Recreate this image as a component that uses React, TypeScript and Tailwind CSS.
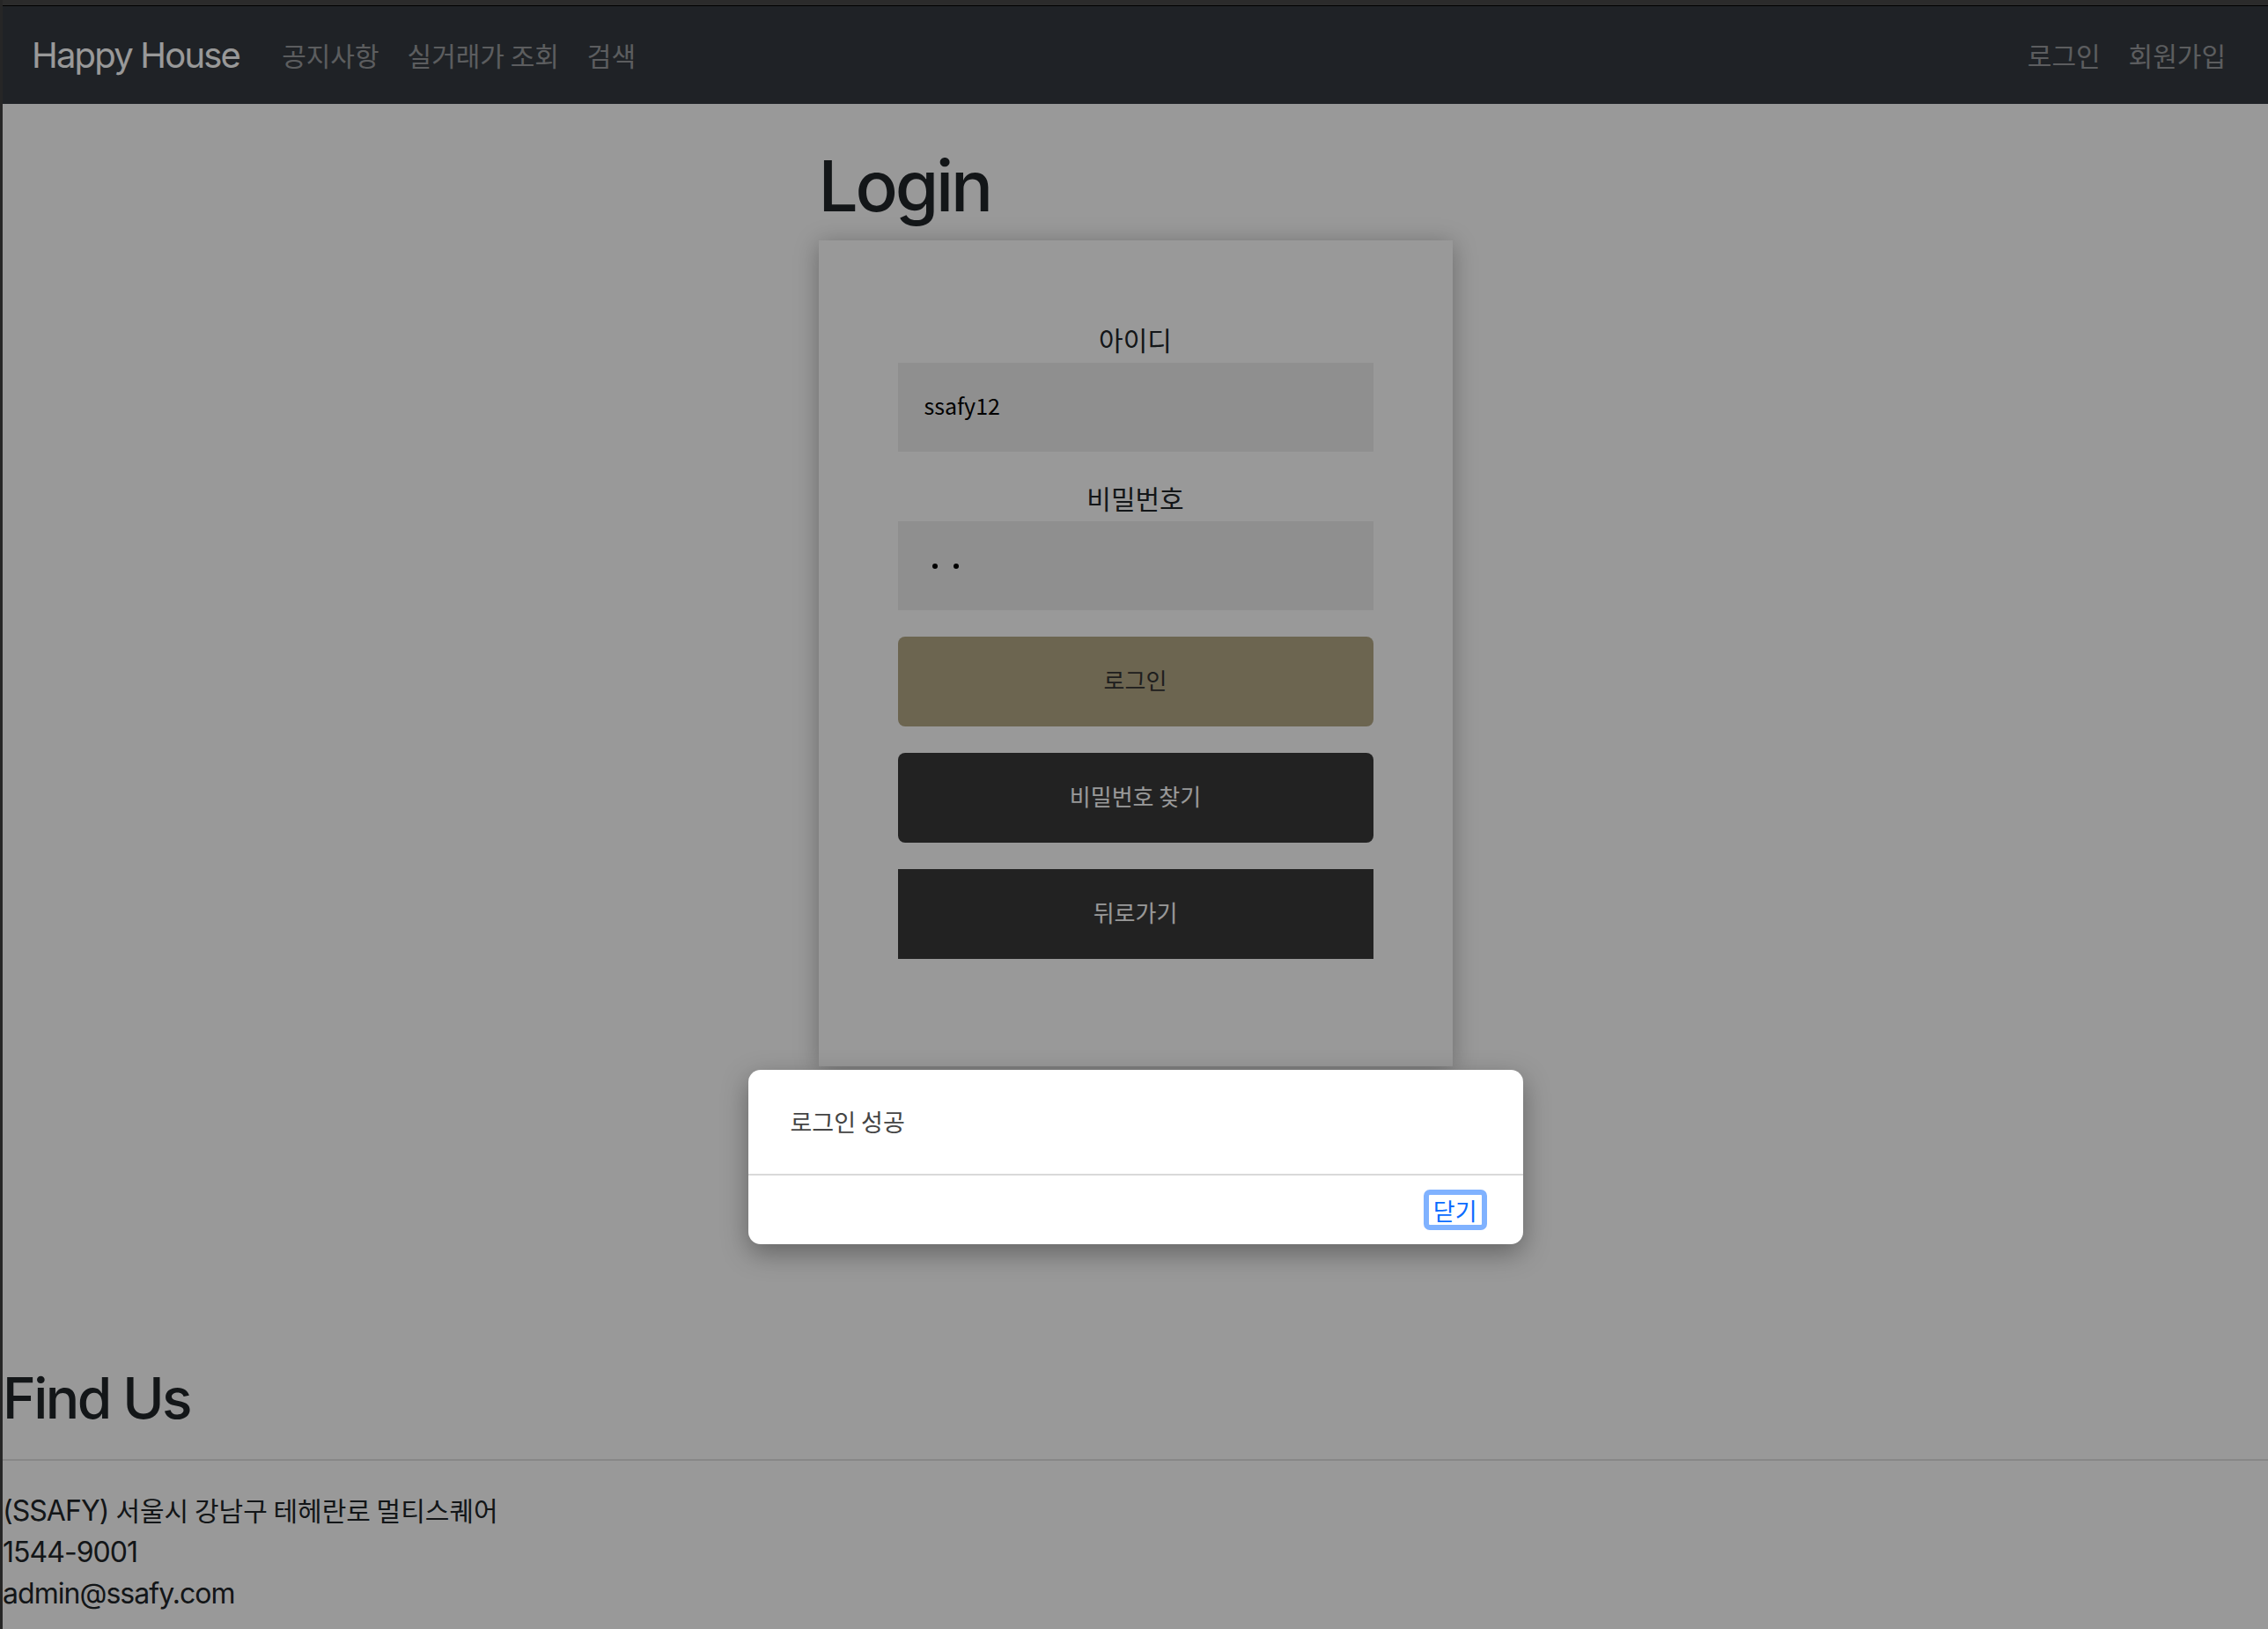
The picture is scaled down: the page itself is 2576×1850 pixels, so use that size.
import React from "react";

const KR = "font-['Noto_Sans_CJK_KR',sans-serif]";

const NavLink = ({ label }: { label: string }) => (
  <a className={`px-4 text-[30px] text-white/50 ${KR}`}>{label}</a>
);

const Field = ({ label, children }: { label: string; children: React.ReactNode }) => (
  <div className="flex flex-col">
    <label className={`h-[49px] leading-[44px] text-center text-[30px] text-[#212529] ${KR}`}>{label}</label>
    <div className="h-[101px] bg-[#eeeeee] flex items-center pl-[30px]">{children}</div>
  </div>
);

const App = () => {
  return (
    <div className="relative min-h-screen bg-white border-l-[3px] border-[#262626] font-[Inter,'Noto_Sans_CJK_KR',sans-serif] text-[#212529]">
      {/* window edge */}
      <div className="h-[6px] bg-[#484848]" />
      <div className="h-px bg-black" />

      {/* navbar */}
      <nav className="h-[111px] bg-[#343a40] flex items-center pl-[33px] pr-8">
        <a className="text-[40px] tracking-[-0.045em] text-white mr-[32px]">Happy House</a>
        <NavLink label="공지사항" />
        <NavLink label="실거래가 조회" />
        <NavLink label="검색" />
        <div className="ml-auto flex">
          <NavLink label="로그인" />
          <NavLink label="회원가입" />
        </div>
      </nav>

      {/* login */}
      <main className="w-[720px] mx-auto">
        <h1 className="mt-[45px] mb-[14px] text-[80px] leading-[1.2] font-medium tracking-[-0.04em]">Login</h1>
        <div className="bg-white shadow-[0_4px_26px_rgba(0,0,0,0.3)] px-[90px] pt-[90px] pb-[122px] flex flex-col gap-[30px]">
          <Field label="아이디">
            <span className={`mb-[4px] text-[25px] text-black ${KR}`}>ssafy12</span>
          </Field>
          <Field label="비밀번호">
            <div className="flex gap-[18px] ml-[9px]">
              <span className="w-[6px] h-[6px] rounded-full bg-black" />
              <span className="w-[6px] h-[6px] rounded-full bg-black" />
            </div>
          </Field>
          <button className={`h-[102px] pb-[5px] rounded-[8px] bg-[#b4a885] text-[26px] text-[#333] ${KR}`}>로그인</button>
          <button className={`h-[102px] pb-[5px] rounded-[8px] bg-[#3a3a3a] text-[26px] text-white ${KR}`}>비밀번호 찾기</button>
          <button className={`h-[102px] pb-[5px] bg-[#3a3a3a] text-[26px] text-white ${KR}`}>뒤로가기</button>
        </div>
      </main>

      {/* footer */}
      <footer className="mt-[339px]">
        <h2 className="text-[64px] leading-[1.2] font-medium tracking-[-0.04em]">Find Us</h2>
        <div className="mt-[30px] border-t-2 border-[#e2e2e2]" />
        <div className="mt-[32px] text-[32px] leading-[47px] tracking-[-0.03em]">
          <p>
            (SSAFY) <span className={`text-[30px] tracking-normal ${KR}`}>서울시 강남구 테헤란로 멀티스퀘어</span>
          </p>
          <p>1544-9001</p>
          <p>admin@ssafy.com</p>
        </div>
      </footer>

      {/* alert backdrop + dialog */}
      <div className="absolute inset-0 bg-black/40">
        <div className="w-[880px] mx-auto mt-[1215px] bg-white rounded-[14px] shadow-[0_10px_30px_rgba(0,0,0,0.35)] overflow-hidden">
          <div className={`h-[118px] flex items-center px-[48px] text-[27px] text-[#444] ${KR}`}>로그인 성공</div>
          <div className="border-t-2 border-[#d9d9d9]" />
          <div className="h-[78px] flex items-center justify-end pr-[41px]">
            <button className={`h-[46px] px-[5px] rounded-[7px] border-[6px] border-[#80b2ff] bg-white text-[27px] leading-none text-[#0a6cff] ${KR}`}>
              닫기
            </button>
          </div>
        </div>
      </div>
    </div>
  );
};

export default App;
